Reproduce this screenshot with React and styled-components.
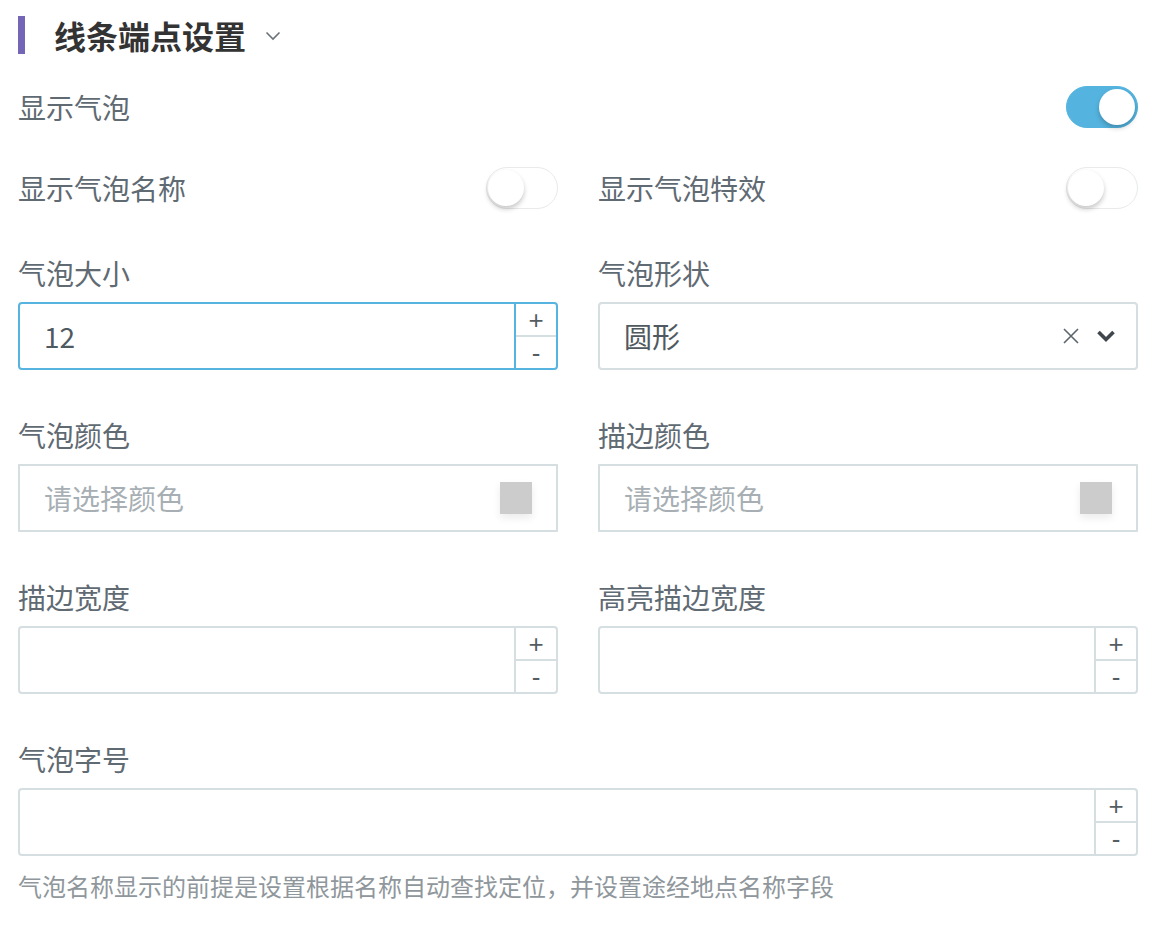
import React, { useState } from "react"
import styled, { createGlobalStyle } from "styled-components"

const GlobalStyle = createGlobalStyle`
  body {
    margin: 0;
    background: #fff;
    font-family: "Noto Sans CJK SC", "Noto Sans", sans-serif;
  }
`

const Page = styled.div`
  width: 1120px;
  padding: 16px 18px 0;
`

const Header = styled.div`
  display: flex;
  align-items: center;
  height: 38px;
  margin-bottom: 33px;
`

const Bar = styled.span`
  width: 7px;
  height: 38px;
  background: #7465b6;
`

const Title = styled.h2`
  margin: 0 0 0 29px;
  font-size: 32px;
  line-height: 38px;
  font-weight: 700;
  color: #333;
`

const Caret = styled.svg`
  margin-left: 19px;
  margin-top: 2px;
`

const Grid = styled.div`
  display: grid;
  grid-template-columns: 540px 540px;
  column-gap: 40px;
`

const SwitchRow = styled.div`
  grid-column: ${(p) => (p.full ? "1 / -1" : "auto")};
  display: flex;
  align-items: center;
  justify-content: space-between;
  height: 40px;
  margin-bottom: ${(p) => p.gap}px;
`

const Label = styled.div`
  font-size: 28px;
  line-height: 40px;
  color: #5f6a73;
`

const Track = styled.button`
  position: relative;
  width: 72px;
  height: 42px;
  padding: 0;
  border-radius: 21px;
  border: 1px solid ${(p) => (p.on ? "#54b4df" : "#e8eaeb")};
  background: ${(p) => (p.on ? "#54b4df" : "#fff")};
  cursor: pointer;
`

const Knob = styled.span`
  position: absolute;
  top: 2px;
  left: ${(p) => (p.on ? "32px" : "1px")};
  width: 36px;
  height: 36px;
  border-radius: 50%;
  background: #fff;
  box-shadow: 0 3px 5px rgba(0, 0, 0, 0.22);
`

const Field = styled.div`
  grid-column: ${(p) => (p.full ? "1 / -1" : "auto")};
  margin-bottom: ${(p) => (p.last ? 0 : 45)}px;
`

const FieldLabel = styled(Label)`
  margin-bottom: 9px;
`

const Box = styled.div`
  display: flex;
  align-items: stretch;
  height: 68px;
  box-sizing: border-box;
  border: 2px solid ${(p) => (p.focus ? "#57b3df" : "#d5dee1")};
  border-radius: ${(p) => (p.square ? "1px" : "4px")};
  background: #fff;
`

const Value = styled.div`
  flex: 1;
  display: flex;
  align-items: center;
  padding-left: 24px;
  font-size: 28px;
  color: ${(p) => (p.placeholder ? "#a7afb4" : "#4f5960")};
`

const Stepper = styled.div`
  display: flex;
  flex-direction: column;
  width: 40px;
  border-left: 2px solid ${(p) => (p.focus ? "#57b3df" : "#d5dee1")};
`

const StepBtn = styled.div`
  flex: 1;
  display: flex;
  align-items: center;
  justify-content: center;
  font-family: "Liberation Sans", sans-serif;
  font-size: 26px;
  line-height: 1;
  color: #555d63;
  & + & {
    border-top: 2px solid ${(p) => (p.focus ? "#57b3df" : "#d5dee1")};
  }
`

const Icons = styled.div`
  display: flex;
  align-items: center;
  gap: 16px;
  padding-right: 20px;
`

const Swatch = styled.span`
  align-self: center;
  width: 32px;
  height: 32px;
  margin-right: 24px;
  background: #cccccc;
  box-shadow: 0 4px 8px rgba(0, 0, 0, 0.08);
`

const Hint = styled.div`
  margin-top: 14px;
  font-size: 24px;
  line-height: 32px;
  color: #8f979c;
`

const NumberBox = ({ value, focus }) => (
  <Box focus={focus}>
    <Value>{value}</Value>
    <Stepper focus={focus}>
      <StepBtn focus={focus}>+</StepBtn>
      <StepBtn focus={focus}>-</StepBtn>
    </Stepper>
  </Box>
)

const ColorBox = () => (
  <Box square>
    <Value placeholder>请选择颜色</Value>
    <Swatch />
  </Box>
)

const Toggle = ({ initial }) => {
  const [on, setOn] = useState(initial)
  return (
    <Track on={on} onClick={() => setOn(!on)}>
      <Knob on={on} />
    </Track>
  )
}

const App = () => {
  return (
    <Page>
      <GlobalStyle />
      <Header>
        <Bar />
        <Title>线条端点设置</Title>
        <Caret width="16" height="10" viewBox="0 0 16 10">
          <path d="M1.5 1.5 L8 8 L14.5 1.5" fill="none" stroke="#6b737a" strokeWidth="1.6" />
        </Caret>
      </Header>
      <Grid>
        <SwitchRow full gap={41}>
          <Label>显示气泡</Label>
          <Toggle initial={true} />
        </SwitchRow>
        <SwitchRow gap={45}>
          <Label>显示气泡名称</Label>
          <Toggle initial={false} />
        </SwitchRow>
        <SwitchRow gap={45}>
          <Label>显示气泡特效</Label>
          <Toggle initial={false} />
        </SwitchRow>

        <Field>
          <FieldLabel>气泡大小</FieldLabel>
          <NumberBox value="12" focus />
        </Field>
        <Field>
          <FieldLabel>气泡形状</FieldLabel>
          <Box>
            <Value>圆形</Value>
            <Icons>
              <svg width="18" height="18" viewBox="0 0 18 18">
                <path d="M2 2 L16 16 M16 2 L2 16" stroke="#5c656c" strokeWidth="1.6" fill="none" />
              </svg>
              <svg width="20" height="14" viewBox="0 0 20 14">
                <path d="M2.5 3 L10 10.5 L17.5 3" stroke="#3f464c" strokeWidth="3.6" fill="none" />
              </svg>
            </Icons>
          </Box>
        </Field>

        <Field>
          <FieldLabel>气泡颜色</FieldLabel>
          <ColorBox />
        </Field>
        <Field>
          <FieldLabel>描边颜色</FieldLabel>
          <ColorBox />
        </Field>

        <Field>
          <FieldLabel>描边宽度</FieldLabel>
          <NumberBox value="" />
        </Field>
        <Field>
          <FieldLabel>高亮描边宽度</FieldLabel>
          <NumberBox value="" />
        </Field>

        <Field full last>
          <FieldLabel>气泡字号</FieldLabel>
          <NumberBox value="" />
          <Hint>气泡名称显示的前提是设置根据名称自动查找定位，并设置途经地点名称字段</Hint>
        </Field>
      </Grid>
    </Page>
  )
}

export default App
